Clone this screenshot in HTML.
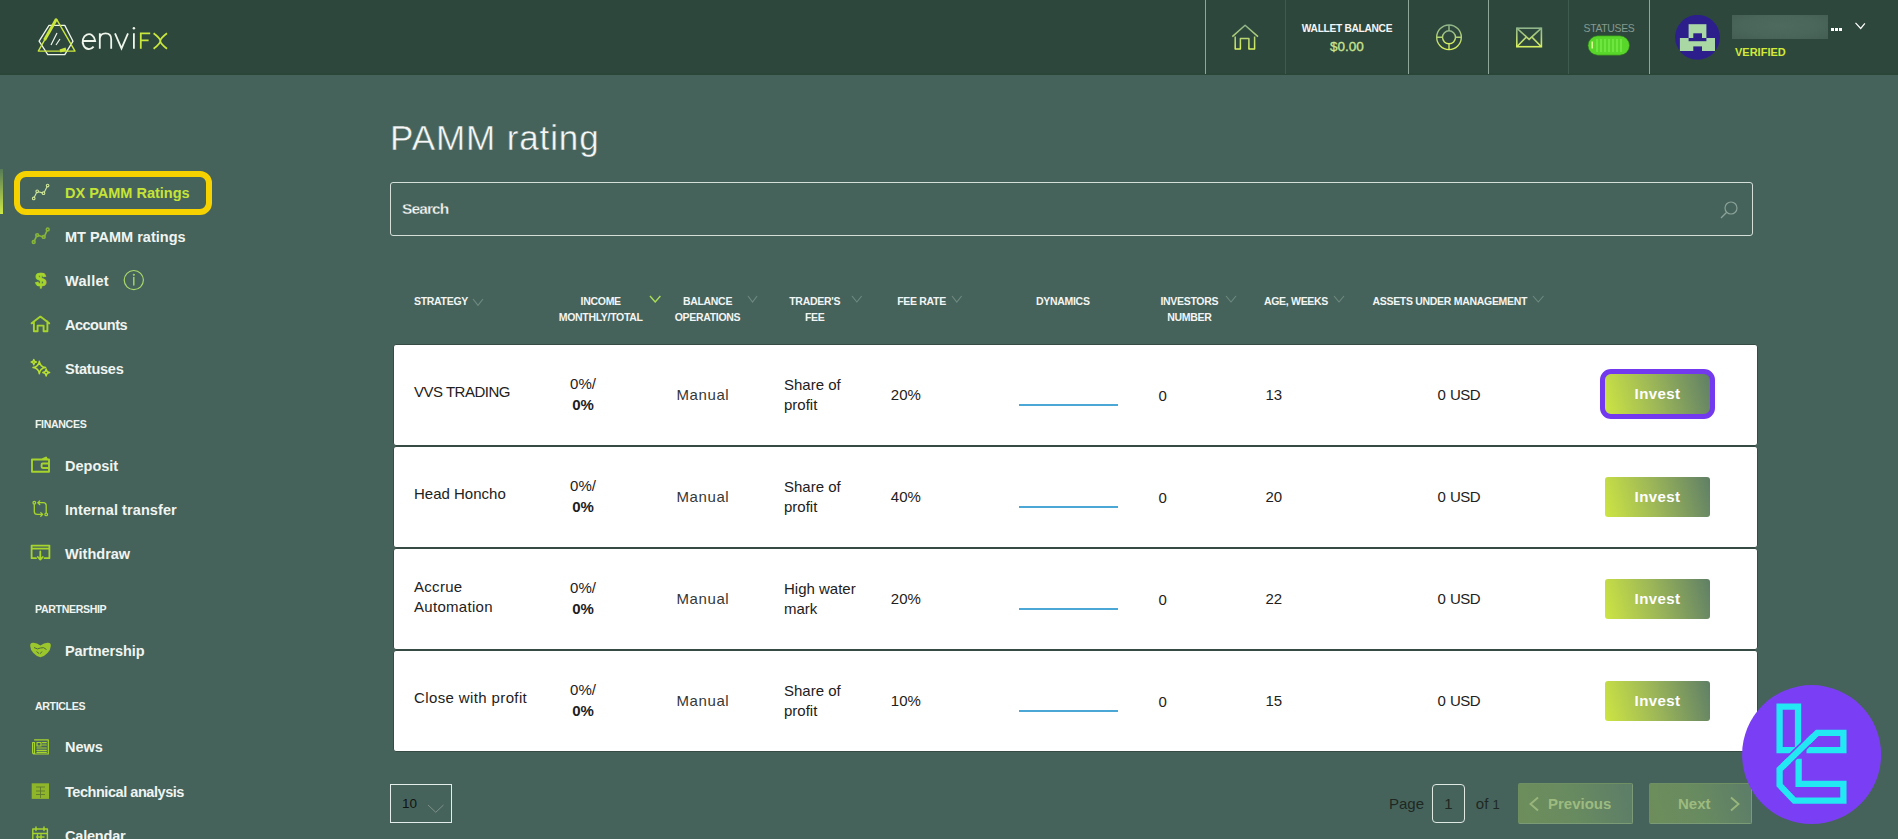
<!DOCTYPE html>
<html><head><meta charset="utf-8">
<style>
*{margin:0;padding:0;box-sizing:border-box}
html,body{width:1898px;height:839px;overflow:hidden}
body{background:#46635b;font-family:"Liberation Sans",sans-serif;position:relative}
.a{position:absolute;white-space:nowrap;line-height:1}
#hdr{position:absolute;left:0;top:0;width:1898px;height:75px;background:#2e473d;border-bottom:2px solid #2a4639}
.sep{position:absolute;top:0;width:1px;height:74px;background:#8ea79a}
.sep.f{background:#3f5a4f}
.nav{color:#f0f4f1;font-weight:bold;font-size:14.5px}
.sec{color:#f0f4f1;font-weight:bold;font-size:10.6px;letter-spacing:-0.35px}
.th{color:#f2f5f3;font-weight:bold;font-size:10.5px;text-align:center;line-height:16px}
.card{position:absolute;left:393px;width:1365px;height:102px;background:#fff;border:1px solid #364b43;border-radius:3px}
.td{color:#1e2120;font-size:15px}
.btn{position:absolute;left:1605px;width:105px;height:40px;border-radius:3px;background:linear-gradient(75deg,#cde542 0%,#9fb957 45%,#5f7f66 100%);color:#fff;font-weight:bold;font-size:15px;text-align:center;line-height:40px;letter-spacing:0.4px}
.dyn{position:absolute;left:1019px;width:99px;height:2px;background:#4aa7d6}
.chev{position:absolute}
</style></head><body>
<div id="hdr"></div>
<!-- logo -->
<svg class="a" style="left:30px;top:10px" width="150" height="55" viewBox="0 0 150 55">
  <g fill="none" stroke-linejoin="round">
    <polygon points="19,15.4 34.8,15.4 43,31.2 34.8,44.7 17.8,44.7 9.1,31.2" stroke="#eef5ea" stroke-width="1.3"/>
    <polygon points="26.5,9.1 45,41.1 8.3,41.1" stroke="#c8e63c" stroke-width="1.4"/>
    <path d="M26.5 9.1 L14.5 30" stroke="#c8e63c" stroke-width="3"/>
    <path d="M30 41 L36 39" stroke="#c8e63c" stroke-width="3"/>
    <path d="M21 35 L27 23 M26 35 L30 29" stroke="#eef5ea" stroke-width="1.2"/>
  </g>
</svg>
<svg class="a" style="left:0;top:0" width="200" height="75" viewBox="0 0 200 75"><g fill="none" stroke-width="1.8" stroke-linecap="butt">
 <path d="M82.7 41 H95.2 A6.3 7.4 0 1 0 93.6 46.6" stroke="#eef5ea"/>
 <path d="M99.8 33.3 V48.7 M99.8 38.5 Q100.2 33.5 105.6 33.4 Q111.2 33.4 111.2 39.2 V48.7" stroke="#eef5ea"/>
 <path d="M115 33.3 L121.5 48.4 L128 33.3" stroke="#eef5ea"/>
 <path d="M133.9 33.3 V48.7" stroke="#eef5ea"/>
 <circle cx="133.9" cy="28.3" r="1.25" fill="#eef5ea"/>
 <path d="M140.8 48.7 V33.3 H150.2 M140.8 40.3 H148.6" stroke="#c8e63c"/>
 <path d="M153.6 33.3 Q160.4 38.5 160.3 41 Q160.4 43.5 153.6 48.7 M167 33.3 Q160.2 38.5 160.3 41 Q160.2 43.5 167 48.7" stroke="#c8e63c"/>
</g></svg>

<!-- header right -->
<div class="sep" style="left:1205px"></div>
<div class="sep f" style="left:1285px"></div>
<div class="sep" style="left:1408px"></div>
<div class="sep" style="left:1488px"></div>
<div class="sep f" style="left:1568px"></div>
<div class="sep" style="left:1649px"></div>

<svg class="a" style="left:1230px;top:22px" width="30" height="30" viewBox="0 0 30 30">
  <defs><linearGradient id="ig" x1="0" y1="0" x2="0" y2="1"><stop offset="0" stop-color="#8fb58a"/><stop offset="1" stop-color="#d7f060"/></linearGradient></defs>
  <path d="M2.3 14.6 L15.1 3.2 L28 14.6 M5.2 14.6 V26.9 H10.4 V16.5 H18.9 V26.9 H24.6 V14.6" fill="none" stroke="url(#ig)" stroke-width="1.5" stroke-linejoin="round"/>
</svg>
<div class="a" style="left:1300px;top:24px;width:94px;text-align:center;font-size:10.2px;font-weight:bold;color:#f3f6f4;letter-spacing:-0.3px">WALLET BALANCE</div>
<div class="a" style="left:1300px;top:39.5px;width:94px;text-align:center;font-size:13.5px;color:#c9e58e;-webkit-text-stroke:0.3px #c9e58e">$0.00</div>

<svg class="a" style="left:1433px;top:21px" width="32" height="32" viewBox="0 0 32 32">
  <defs><linearGradient id="ig2" x1="0" y1="0" x2="0" y2="1"><stop offset="0" stop-color="#8fb58a"/><stop offset="1" stop-color="#d7f060"/></linearGradient></defs>
  <g fill="none" stroke="url(#ig2)" stroke-width="1.4">
    <circle cx="16" cy="16.3" r="12.3"/><circle cx="16" cy="16.3" r="6.5"/>
    <path d="M16 4 V9.8 M16 22.8 V28.6 M3.7 16.3 H9.5 M22.5 16.3 H28.3"/>
  </g>
</svg>
<svg class="a" style="left:1514px;top:25px" width="30" height="24" viewBox="0 0 30 24">
  <defs><linearGradient id="ig3" x1="0" y1="0" x2="0" y2="1"><stop offset="0" stop-color="#8fb58a"/><stop offset="1" stop-color="#d7f060"/></linearGradient></defs>
  <g fill="none" stroke="url(#ig3)" stroke-width="1.6">
    <rect x="2.8" y="3.2" width="24.6" height="18.5"/>
    <path d="M2.8 3.2 L15.1 14.3 L27.4 3.2 M2.8 21.7 L12 12.4 M27.4 21.7 L18.2 12.4"/>
  </g>
</svg>
<div class="a" style="left:1583px;top:23.8px;width:52px;text-align:center;font-size:10.4px;color:#849a8e;letter-spacing:-0.3px">STATUSES</div>
<svg class="a" style="left:1587px;top:35px" width="44" height="21" viewBox="0 0 44 21">
  <rect x="1" y="0.8" width="41.5" height="19.4" rx="9.7" fill="#58d62a" stroke="#2f7a1c" stroke-width="0.6"/>
  <g stroke="#7ff04e" stroke-width="1.2"><path d="M10 4 V17 M14 4 V17 M18 4 V17 M22 4 V17 M26 4 V17 M30 4 V17 M34 4 V17"/></g>
  <rect x="4.5" y="6.5" width="1.4" height="7" fill="#e8ff9a"/>
</svg>
<svg class="a" style="left:1675px;top:15px" width="45" height="45" viewBox="0 0 45 45">
  <circle cx="22.5" cy="22.3" r="22.4" fill="#2c1f8c"/>
  <rect x="13.6" y="9.2" width="17.8" height="13.8" fill="#a9d8a4"/>
  <rect x="18.3" y="18.3" width="8.7" height="4.7" fill="#2c1f8c"/>
  <rect x="4.9" y="23" width="35.1" height="13" fill="#a9d8a4"/>
  <rect x="13.6" y="23" width="17.8" height="3.2" fill="#2c1f8c"/>
  <rect x="18.3" y="31.4" width="8.7" height="4.6" fill="#2c1f8c"/>
</svg>
<div class="a" style="left:1732px;top:15px;width:96px;height:24px;background:radial-gradient(ellipse at 50% 45%,#4e6a5f 0%,#4a655a 55%,#445e53 100%);filter:blur(0.5px)"></div>
<svg class="a" style="left:1830px;top:27px" width="14" height="6" viewBox="0 0 14 6" shape-rendering="crispEdges"><rect x="1" y="1" width="3" height="3" fill="#fff"/><rect x="5" y="1" width="3" height="3" fill="#fff"/><rect x="9" y="1" width="3" height="3" fill="#fff"/></svg>
<svg class="a" style="left:1853px;top:20px" width="14" height="10" viewBox="0 0 14 10"><path d="M2.5 2.8 L7.7 8.5 L11.9 3.3" fill="none" stroke="#fff" stroke-width="1.2"/></svg>
<div class="a" style="left:1735px;top:46.5px;font-size:11px;font-weight:bold;color:#d2ea38">VERIFIED</div>


<svg class="a" style="left:0;top:0" width="200" height="839" viewBox="0 0 200 839">
 <g fill="none" stroke-linecap="round" stroke-linejoin="round">
  <!-- DX PAMM -->
  <g stroke="#cfe69a" stroke-width="1.1">
   <path d="M34.3 197.3 L36.6 192.5 M38.3 191.8 L42.4 192.9 M44.3 192.2 L47 186.8"/>
   <circle cx="33.7" cy="198.4" r="1.3"/><circle cx="37.2" cy="191.3" r="1.3"/><circle cx="43.5" cy="193.2" r="1.3"/><circle cx="47.6" cy="185.6" r="1.3"/>
  </g>
  <!-- MT PAMM -->
  <g stroke="#86b53a" stroke-width="1.6">
   <path d="M34.3 240.8 L36.6 236.2 M38.4 235.5 L42.8 236.7 M44.6 235.8 L47.1 230.6"/>
   <circle cx="33.7" cy="242" r="1.4"/><circle cx="37.2" cy="235.1" r="1.4"/><circle cx="43.7" cy="236.9" r="1.4"/><circle cx="47.7" cy="229.4" r="1.4"/>
  </g>
  <!-- info -->
  <circle cx="133.8" cy="280.1" r="9.6" stroke="#a9d86a" stroke-width="1.2"/>
  <path d="M133.8 277.5 V285" stroke="#a9d86a" stroke-width="1.4"/>
  <circle cx="133.8" cy="274.8" r="0.6" fill="#a9d86a" stroke="#a9d86a" stroke-width="0.8"/>
  <!-- accounts house -->
  <g stroke="#a6d42c" stroke-width="1.9">
   <path d="M31.6 323.3 L40.4 316.6 L49.2 323.3 M33.9 321.5 V331.3 H37.6 V325.6 H43.6 V331.3 H47.4 V321.5"/>
  </g>
  <!-- statuses sparkles -->
  <g stroke="#b8e030" stroke-width="1.5">
   <path d="M39.3 361.3 Q40 366.8 45.6 367.5 Q40 368.2 39.3 373.7 Q38.6 368.2 33 367.5 Q38.6 366.8 39.3 361.3 Z"/>
   <path d="M33.8 359.5 Q34.1 361.8 36.4 362.1 Q34.1 362.4 33.8 364.7 Q33.5 362.4 31.2 362.1 Q33.5 361.8 33.8 359.5 Z"/>
   <path d="M46.2 369 Q46.5 372.2 49.6 372.5 Q46.5 372.8 46.2 376 Q45.9 372.8 42.8 372.5 Q45.9 372.2 46.2 369 Z"/>
  </g>
  <!-- deposit wallet -->
  <g stroke="#a6d42c" stroke-width="1.9">
   <path d="M32 459.5 H49 V471.8 H32 Z M41.5 459.5 L46 457.5 L47 459.5 M49 463.5 H42.8 Q41.6 463.5 41.6 464.7 V466.8 Q41.6 468 42.8 468 H49"/>
  </g>
  <!-- internal transfer -->
  <g stroke="#a6d42c" stroke-width="1.3">
   <circle cx="34.3" cy="502.7" r="1.3"/><circle cx="46.2" cy="514.4" r="1.3"/>
   <path d="M34.3 504.6 V511.5 Q34.3 514.4 37.2 514.4 H42.5 M40.8 512.6 L42.7 514.4 L40.8 516.2"/>
   <path d="M46.2 512.5 V505.6 Q46.2 502.7 43.3 502.7 H38 M39.7 500.9 L37.8 502.7 L39.7 504.5"/>
  </g>
  <!-- withdraw -->
  <g stroke="#a6d42c" stroke-width="1.8">
   <path d="M36 558.2 H31.6 V545.6 H49.4 V558.2 H44.6 M31.6 548.6 H49.4 M40.3 551.5 V559.5 M37.8 557 L40.3 559.6 L42.8 557"/>
  </g>
  <!-- news -->
  <g stroke="#a6d42c" stroke-width="1.2">
   <path d="M34.5 739.8 H48.3 V754 H34.5 Q32.6 754 32.6 752 V742.5 H34.5 V754"/>
   <path d="M37 742.5 H41 V746 H37 Z M42.5 742.6 H46.3 M42.5 745 H46.3 M37 748 H46.3 M37 750.4 H46.3 M37 752.4 H46.3"/>
  </g>
  <!-- calendar -->
  <g stroke="#a6d42c" stroke-width="1.4">
   <path d="M32.8 829 H47.4 V845 H32.8 Z M32.8 833.5 H47.4 M36 827 V830.5 M44 827 V830.5 M36.5 837 H44 M36.5 840.5 H44 M37.5 835 V844 M41 835 V844"/>
  </g>
 </g>
 <!-- filled icons -->
 <text x="35.2" y="285.6" font-family="Liberation Sans" font-weight="bold" font-size="17.5" fill="#a6d42c" stroke="#a6d42c" stroke-width="0.7" transform="translate(35.2 0) scale(1.12 1) translate(-35.2 0)">$</text>
 <path d="M31.7 783.3 H49 V798.9 H31.7 Z" fill="#8fb52a"/>
 <path d="M36 787 H45 M40.5 787 V798 M36 791 H45 M36 794.5 H45" stroke="#5c7a2a" stroke-width="0.9"/>
 <path d="M30.2 646 Q30 642.5 33.5 642.8 Q37 643 40.4 645.4 Q44 643 47.5 642.8 Q51 642.5 50.8 646 Q50.6 650 47.5 653 Q44 656.8 40.4 657.2 Q36.8 656.8 33.4 653 Q30.4 650 30.2 646 Z" fill="#9cc72c"/>
 <path d="M34 647.5 Q37.5 650 40.5 648 Q43.5 646.5 46.5 649.5 M36.5 651.5 L39 653.5 M42 651.5 L40 653.8" stroke="#4e6b3e" stroke-width="1" fill="none"/>
</svg>
<!-- sidebar -->
<div class="a" style="left:0;top:169px;width:3px;height:45px;background:linear-gradient(#557a57,#cde848)"></div>
<div class="a" style="left:14px;top:171.4px;width:198.2px;height:43.4px;border:6px solid #f6d300;border-radius:12px"></div>
<div class="a nav" style="left:65px;top:185.7px;color:#c6e436">DX PAMM Ratings</div>
<div class="a nav" style="left:65px;top:229.8px">MT PAMM ratings</div>
<div class="a nav" style="letter-spacing:0.3px;left:65px;top:273.5px">Wallet</div>
<div class="a nav" style="letter-spacing:-0.5px;left:65px;top:317.5px">Accounts</div>
<div class="a nav" style="letter-spacing:-0.25px;left:65px;top:361.5px">Statuses</div>
<div class="a sec" style="left:35px;top:419.1px">FINANCES</div>
<div class="a nav" style="left:65px;top:458.7px">Deposit</div>
<div class="a nav" style="letter-spacing:0.08px;left:65px;top:502.7px">Internal transfer</div>
<div class="a nav" style="left:65px;top:546.7px">Withdraw</div>
<div class="a sec" style="left:35px;top:603.7px">PARTNERSHIP</div>
<div class="a nav" style="letter-spacing:-0.1px;left:65px;top:644.4px">Partnership</div>
<div class="a sec" style="left:35px;top:701.1px">ARTICLES</div>
<div class="a nav" style="left:65px;top:739.7px">News</div>
<div class="a nav" style="letter-spacing:-0.45px;left:65px;top:784.7px">Technical analysis</div>
<div class="a nav" style="letter-spacing:-0.2px;left:65px;top:828.7px">Calendar</div>

<!-- main -->
<div class="a" style="left:390px;top:119.5px;font-size:35px;color:#f4f7f5;letter-spacing:0.9px;-webkit-text-stroke:0.45px #46635b">PAMM rating</div>
<div class="a" style="left:390px;top:182px;width:1363px;height:54px;border:1.3px solid #d5dfda;border-radius:3px"></div>
<div class="a" style="left:402px;top:200.5px;font-size:15.5px;font-weight:bold;color:#f4f7f5;letter-spacing:-0.9px;-webkit-text-stroke:0.3px #46635b">Search</div>
<svg class="a" style="left:1718px;top:199px" width="22" height="22" viewBox="0 0 22 22"><circle cx="13" cy="9" r="6" fill="none" stroke="#8aa297" stroke-width="1.2"/><path d="M8.7 13.3 L3 19" stroke="#8aa297" stroke-width="1.3"/></svg>


<div class="a th" style="left:414px;top:293.4px;text-align:left;letter-spacing:-0.3px">STRATEGY</div>
<svg class="a" style="left:472px;top:297.6px" width="12" height="8.399999999999977" viewBox="472 297.6 12 8.399999999999977"><path d="M473 298.6 L478.0 305 L483 298.6" fill="none" stroke="#6f8a80" stroke-width="1.1"/></svg>
<div class="a th" style="left:520.7px;top:293.36px;width:160px;letter-spacing:-0.3px">INCOME<br>MONTHLY/TOTAL</div>
<svg class="a" style="left:649.3px;top:295px" width="12.400000000000091" height="8" viewBox="649.3 295 12.400000000000091 8"><path d="M650.3 296 L655.5 302 L660.7 296" fill="none" stroke="#a9dc5a" stroke-width="1.4"/></svg>
<div class="a th" style="left:627.5px;top:293.36px;width:160px;letter-spacing:-0.3px">BALANCE<br>OPERATIONS</div>
<svg class="a" style="left:747.3px;top:295px" width="11.100000000000023" height="8" viewBox="747.3 295 11.100000000000023 8"><path d="M748.3 296 L752.8499999999999 302 L757.4 296" fill="none" stroke="#6f8a80" stroke-width="1.1"/></svg>
<div class="a th" style="left:734.7px;top:293.36px;width:160px;letter-spacing:-0.3px">TRADER'S<br>FEE</div>
<svg class="a" style="left:851px;top:295px" width="11.700000000000045" height="8" viewBox="851 295 11.700000000000045 8"><path d="M852 296 L856.85 302 L861.7 296" fill="none" stroke="#6f8a80" stroke-width="1.1"/></svg>
<div class="a th" style="left:841.5px;top:293.36px;width:160px;letter-spacing:-0.3px">FEE RATE</div>
<svg class="a" style="left:951.2px;top:295px" width="11.599999999999909" height="8" viewBox="951.2 295 11.599999999999909 8"><path d="M952.2 296 L957.0 302 L961.8 296" fill="none" stroke="#6f8a80" stroke-width="1.1"/></svg>
<div class="a th" style="left:982.8px;top:293.36px;width:160px;letter-spacing:-0.3px">DYNAMICS</div>
<div class="a th" style="left:1109.3px;top:293.36px;width:160px;letter-spacing:-0.3px">INVESTORS<br>NUMBER</div>
<svg class="a" style="left:1225.3px;top:295px" width="12.0" height="8" viewBox="1225.3 295 12.0 8"><path d="M1226.3 296 L1231.3 302 L1236.3 296" fill="none" stroke="#6f8a80" stroke-width="1.1"/></svg>
<div class="a th" style="left:1216.0px;top:293.36px;width:160px;letter-spacing:-0.3px">AGE, WEEKS</div>
<svg class="a" style="left:1332.6px;top:295px" width="12.0" height="8" viewBox="1332.6 295 12.0 8"><path d="M1333.6 296 L1338.6 302 L1343.6 296" fill="none" stroke="#6f8a80" stroke-width="1.1"/></svg>
<div class="a th" style="left:1339.8px;top:293.36px;width:220px;letter-spacing:-0.3px">ASSETS UNDER MANAGEMENT</div>
<svg class="a" style="left:1532.4px;top:295px" width="12.5" height="8" viewBox="1532.4 295 12.5 8"><path d="M1533.4 296 L1538.65 302 L1543.9 296" fill="none" stroke="#6f8a80" stroke-width="1.1"/></svg>
<div class="card" style="top:344px"></div>
<div class="a td" style="left:414px;top:383.8px;letter-spacing:-0.5px">VVS TRADING</div>
<div class="a td" style="left:543px;width:80px;text-align:center;top:375.8px">0%/</div>
<div class="a td" style="left:543px;width:80px;text-align:center;top:396.8px;font-weight:bold">0%</div>
<div class="a td" style="left:676.5px;top:387.1px;letter-spacing:0.6px;color:#343837">Manual</div>
<div class="a td" style="left:784px;top:377.3px">Share of</div>
<div class="a td" style="left:784px;top:396.8px">profit</div>
<div class="a td" style="left:890.8px;top:387.1px">20%</div>
<div class="dyn" style="top:404px"></div>
<div class="a td" style="left:1158.5px;top:387.6px">0</div>
<div class="a td" style="left:1265.5px;top:387.1px">13</div>
<div class="a td" style="left:1437.5px;top:387.1px;letter-spacing:-0.6px;word-spacing:1.2px">0 USD</div>
<div class="btn" style="left:1600.3px;top:368.8px;width:114.4px;height:49.8px;border-radius:11px;border:5.6px solid #7339ef;line-height:38.6px;padding-top:1.5px">Invest</div>
<div class="card" style="top:446px"></div>
<div class="a td" style="left:414px;top:485.8px;letter-spacing:0px">Head Honcho</div>
<div class="a td" style="left:543px;width:80px;text-align:center;top:477.8px">0%/</div>
<div class="a td" style="left:543px;width:80px;text-align:center;top:498.8px;font-weight:bold">0%</div>
<div class="a td" style="left:676.5px;top:489.1px;letter-spacing:0.6px;color:#343837">Manual</div>
<div class="a td" style="left:784px;top:479.3px">Share of</div>
<div class="a td" style="left:784px;top:498.8px">profit</div>
<div class="a td" style="left:890.8px;top:489.1px">40%</div>
<div class="dyn" style="top:506px"></div>
<div class="a td" style="left:1158.5px;top:489.6px">0</div>
<div class="a td" style="left:1265.5px;top:489.1px">20</div>
<div class="a td" style="left:1437.5px;top:489.1px;letter-spacing:-0.6px;word-spacing:1.2px">0 USD</div>
<div class="btn" style="top:477px">Invest</div>
<div class="card" style="top:548px"></div>
<div class="a td" style="left:414px;top:578.9px;letter-spacing:0.3px">Accrue</div>
<div class="a td" style="left:414px;top:598.9px;letter-spacing:0.3px">Automation</div>
<div class="a td" style="left:543px;width:80px;text-align:center;top:579.8px">0%/</div>
<div class="a td" style="left:543px;width:80px;text-align:center;top:600.8px;font-weight:bold">0%</div>
<div class="a td" style="left:676.5px;top:591.1px;letter-spacing:0.6px;color:#343837">Manual</div>
<div class="a td" style="left:784px;top:581.3px">High water</div>
<div class="a td" style="left:784px;top:600.8px">mark</div>
<div class="a td" style="left:890.8px;top:591.1px">20%</div>
<div class="dyn" style="top:608px"></div>
<div class="a td" style="left:1158.5px;top:591.6px">0</div>
<div class="a td" style="left:1265.5px;top:591.1px">22</div>
<div class="a td" style="left:1437.5px;top:591.1px;letter-spacing:-0.6px;word-spacing:1.2px">0 USD</div>
<div class="btn" style="top:579px">Invest</div>
<div class="card" style="top:650px"></div>
<div class="a td" style="left:414px;top:689.8px;letter-spacing:0.38px">Close with profit</div>
<div class="a td" style="left:543px;width:80px;text-align:center;top:681.8px">0%/</div>
<div class="a td" style="left:543px;width:80px;text-align:center;top:702.8px;font-weight:bold">0%</div>
<div class="a td" style="left:676.5px;top:693.1px;letter-spacing:0.6px;color:#343837">Manual</div>
<div class="a td" style="left:784px;top:683.3px">Share of</div>
<div class="a td" style="left:784px;top:702.8px">profit</div>
<div class="a td" style="left:890.8px;top:693.1px">10%</div>
<div class="dyn" style="top:710px"></div>
<div class="a td" style="left:1158.5px;top:693.6px">0</div>
<div class="a td" style="left:1265.5px;top:693.1px">15</div>
<div class="a td" style="left:1437.5px;top:693.1px;letter-spacing:-0.6px;word-spacing:1.2px">0 USD</div>
<div class="btn" style="top:681px">Invest</div>
<div class="a" style="left:390px;top:784px;width:62px;height:39px;border:1.2px solid #e3eeea"></div>
<div class="a" style="left:402px;top:797.27px;font-size:13.5px;color:#101412">10</div>
<svg class="a" style="left:427.4px;top:803.5px" width="17.5" height="9.299999999999955" viewBox="427.4 803.5 17.5 9.299999999999955"><path d="M428.4 804.5 L436.15 811.8 L443.9 804.5" fill="none" stroke="#7d918a" stroke-width="1.0"/></svg>
<div class="a" style="left:1389px;top:796.3px;font-size:15px;color:#1e2823">Page</div>
<div class="a" style="left:1432px;top:784.3px;width:33px;height:38.4px;border:1.3px solid #dfe9e4;border-radius:4px"></div>
<div class="a" style="left:1432px;width:33px;text-align:center;top:796.3px;font-size:15px;color:#1e2823">1</div>
<div class="a" style="left:1475.8px;top:796.3px;font-size:15px;color:#1e2823">of <span style="font-size:13px">1</span></div>
<div class="a" style="left:1518px;top:783px;width:115px;height:41.4px;border-radius:2px;background:linear-gradient(75deg,#6d8e5b 0%,#688a60 50%,#5c7d68 100%);border:1px solid #7a9b76;border-left-color:#6d8e5e;border-top-color:#6f9063"></div>
<div class="a" style="left:1649.2px;top:783px;width:103.3px;height:41.4px;border-radius:2px;background:linear-gradient(75deg,#6d8e5b 0%,#688a60 50%,#5c7d68 100%);border:1px solid #7a9b76;border-left-color:#6d8e5e;border-top-color:#6f9063"></div>
<div class="a" style="left:1548px;top:796.3px;font-size:15px;font-weight:bold;color:#9dbb80">Previous</div>
<div class="a" style="left:1678px;top:796.3px;font-size:15px;font-weight:bold;color:#9dbb80">Next</div>
<svg class="a" style="left:1729px;top:796px" width="12" height="16" viewBox="0 0 12 16"><path d="M2 1.5 L9.5 8 L2 14.5" fill="none" stroke="#98b67c" stroke-width="1.9"/></svg>
<svg class="a" style="left:1526px;top:796px" width="14" height="16" viewBox="0 0 14 16"><path d="M12 1.5 L4.5 8 L12 14.5" fill="none" stroke="#98b67c" stroke-width="1.9"/></svg>
<svg class="a" style="left:1742px;top:685px" width="140" height="140" viewBox="0 0 140 140"><circle cx="69.6" cy="69.6" r="69.5" fill="#7a3ff4"/></svg>
<svg class="a" style="left:1765px;top:695px" width="90" height="120" viewBox="0 0 629 839"><g fill="none" stroke-linejoin="miter" stroke-miterlimit="10">
<path d="M102 81 H231 V386 H102 Z" stroke="#22e8f4" stroke-width="44"/>
<path d="M235 445 V622 H548 V738 H205 L102 630 V520 L365 265 H548 V386 H290" stroke="#22e8f4" stroke-width="44"/>
<path d="M165 459 L300 328" stroke="#7a3ff4" stroke-width="66"/>
<path d="M125 498 L340 289" stroke="#22e8f4" stroke-width="44"/>
</g></svg>
</body></html>
